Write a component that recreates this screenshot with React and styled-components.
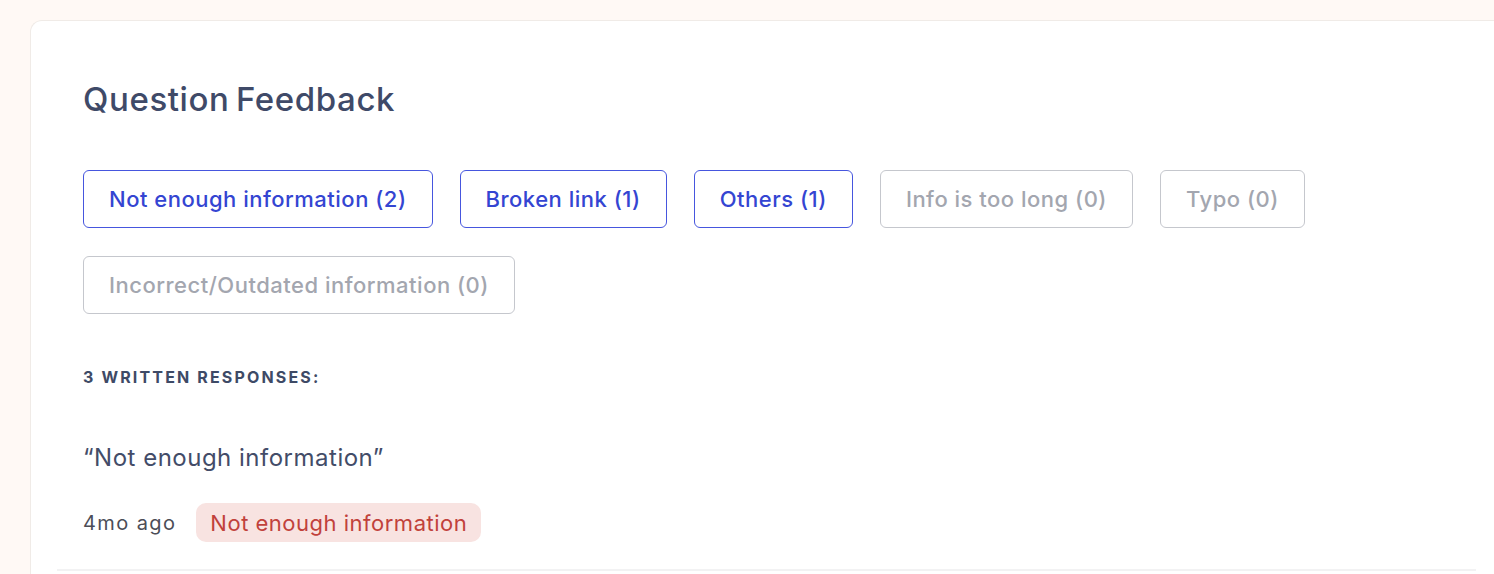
import React from "react";
import styled, { createGlobalStyle } from "styled-components";

const Global = createGlobalStyle`
  html, body { margin: 0; padding: 0; background: #fff9f5; }
  body { font-family: Inter, "Noto Sans", sans-serif; overflow: hidden; }
`;

const Page = styled.div`
  padding: 20px 0 0 30px;
  min-height: 554px;
`;

const Card = styled.section`
  background: #ffffff;
  border: 1px solid #f0ebe7;
  border-right: none;
  border-bottom: none;
  border-radius: 12px 0 0 0;
  padding-top: 58px;
  min-height: 520px;
`;

const Inner = styled.div`
  padding-left: 52px;
`;

const Title = styled.h2`
  margin: 0 0 51px;
  font-size: 33px;
  line-height: 40px;
  font-weight: 500;
  color: #3f4a68;
  letter-spacing: 0.6px;
  word-spacing: -3px;
`;

const Chips = styled.div`
  display: flex;
  flex-wrap: wrap;
  gap: 28px 27px;
  max-width: 1260px;
`;

const Chip = styled.button`
  height: 58px;
  padding: 0 25px;
  border-radius: 6px;
  background: #fff;
  font-family: Inter, sans-serif;
  font-size: 22px;
  font-weight: 500;
  letter-spacing: 0.5px;
  border: 1px solid ${(p) => (p.$active ? "#4656de" : "#c5c7cd")};
  color: ${(p) => (p.$active ? "#3445d2" : "#a3a6af")};
  cursor: pointer;
`;

const Label = styled.div`
  margin-top: 53px;
  font-size: 16px;
  line-height: 20px;
  font-weight: 700;
  color: #3e4a66;
  letter-spacing: 2.15px;
`;

const Quote = styled.p`
  margin: 56px 0 0;
  font-size: 24px;
  line-height: 30px;
  color: #434c68;
  letter-spacing: 0.5px;
`;

const Meta = styled.div`
  margin-top: 30px;
  display: flex;
  align-items: center;
  gap: 20px;
`;

const Time = styled.span`
  font-size: 20px;
  letter-spacing: 1.4px;
  color: #4c4d57;
`;

const Badge = styled.span`
  display: inline-flex;
  align-items: center;
  height: 39px;
  padding: 0 14px;
  border-radius: 10px;
  background: #f8e3e1;
  color: #c1413b;
  font-size: 22px;
  letter-spacing: 0.5px;
`;

const Divider = styled.hr`
  margin: 27px 18px 0 26px;
  border: none;
  border-top: 2px solid #f2f2f3;
`;

const chips = [
  { label: "Not enough information (2)", active: true },
  { label: "Broken link (1)", active: true },
  { label: "Others (1)", active: true },
  { label: "Info is too long (0)", active: false },
  { label: "Typo (0)", active: false },
  { label: "Incorrect/Outdated information (0)", active: false },
];

export default function App() {
  return (
    <>
      <Global />
      <Page>
        <Card>
          <Inner>
            <Title>Question Feedback</Title>
            <Chips>
              {chips.map((c) => (
                <Chip key={c.label} $active={c.active}>
                  {c.label}
                </Chip>
              ))}
            </Chips>
            <Label>3 WRITTEN RESPONSES:</Label>
            <Quote>“Not enough information”</Quote>
            <Meta>
              <Time>4mo ago</Time>
              <Badge>Not enough information</Badge>
            </Meta>
          </Inner>
          <Divider />
        </Card>
      </Page>
    </>
  );
}
